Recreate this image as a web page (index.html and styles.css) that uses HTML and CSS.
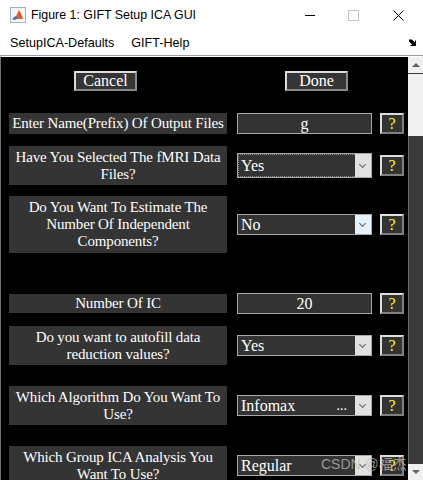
FILE: index.html
```html
<!DOCTYPE html>
<html lang="en">
<head>
    <meta charset="UTF-8">
    <title>Figure 1: GIFT Setup ICA GUI</title>
    <link rel="stylesheet" href="styles.css">
</head>
<body>

    <div class="window">
        <!-- Barra de titulo -->
        <div class="titlebar">
            <svg class="app-icon" width="16" height="16" viewBox="0 0 16 16">
                <rect x="0.5" y="0.5" width="15" height="15" fill="#f4f6fa" stroke="#9fb0c8"/>
                <path d="M2 12 L6 9 L9 3 L13 12 Z" fill="#e8641c"/>
                <path d="M2 12 L6 9 L8 11 L5 13 Z" fill="#3f6fb5"/>
                <path d="M9 3 L11 8 L13 12 L10 9 Z" fill="#c23b12"/>
            </svg>
            <span class="title">Figure 1: GIFT Setup ICA GUI</span>
            <div class="win-controls">
                <span class="ctl-min"></span>
                <span class="ctl-max"></span>
                <svg class="ctl-close" width="11" height="11" viewBox="0 0 11 11">
                    <path d="M0.5 0.5 L10.5 10.5 M10.5 0.5 L0.5 10.5" stroke="#000" stroke-width="1"/>
                </svg>
            </div>
        </div>

        <!-- Menu -->
        <div class="menubar">
            <span class="menu-item">SetupICA-Defaults</span>
            <span class="menu-item">GIFT-Help</span>
            <svg class="dock-icon" width="7" height="7" viewBox="0 0 7 7">
                <path d="M0 0.5 L3 0.5 L6 3.5 L6 1.5 L7 1.5 L7 7 L1.5 7 L1.5 6 L3.5 6 L0 2.5 Z" fill="#000"/>
            </svg>
        </div>

        <!-- Area da figura -->
        <div class="figure">
            <div class="panel">
                <div class="actions">
                    <button class="push">Cancel</button>
                    <button class="push done">Done</button>
                </div>

                <div class="row row-1">
                    <div class="label lines-1">Enter Name(Prefix) Of Output Files</div>
                    <div class="edit">g</div>
                    <button class="help">?</button>
                </div>

                <div class="row row-2">
                    <div class="label lines-2">Have You Selected The fMRI Data Files?</div>
                    <div class="select focused"><span class="value">Yes</span><span class="arrow"></span></div>
                    <button class="help">?</button>
                </div>

                <div class="row row-3">
                    <div class="label lines-3">Do You Want To Estimate The Number Of Independent Components?</div>
                    <div class="select"><span class="value">No</span><span class="arrow hot"></span></div>
                    <button class="help">?</button>
                </div>

                <div class="row row-4">
                    <div class="label lines-0">Number Of IC</div>
                    <div class="edit">20</div>
                    <button class="help">?</button>
                </div>

                <div class="row row-5">
                    <div class="label lines-2">Do you want to autofill data reduction values?</div>
                    <div class="select"><span class="value">Yes</span><span class="arrow"></span></div>
                    <button class="help">?</button>
                </div>

                <div class="row row-6">
                    <div class="label lines-2">Which Algorithm Do You Want To Use?</div>
                    <div class="select"><span class="value">Infomax</span><span class="more">...</span><span class="arrow"></span></div>
                    <button class="help">?</button>
                </div>

                <div class="row row-7">
                    <div class="label lines-2">Which Group ICA Analysis You Want To Use?</div>
                    <div class="select"><span class="value">Regular</span><span class="arrow"></span></div>
                    <button class="help">?</button>
                </div>
            </div>

            <!-- Barra de rolagem -->
            <div class="scrollbar">
                <div class="sb-btn"><span class="tri-up"></span></div>
                <div class="sb-thumb"></div>
                <div class="sb-track"></div>
                <div class="sb-btn"><span class="tri-down"></span></div>
            </div>

            <span class="watermark">CSDN @福杰</span>
        </div>
    </div>

</body>
</html>
```

FILE: styles.css
```css
/* Estilo geral */
body {
    margin: 0;
    background: #fff;
    font-family: "Liberation Sans", Arial, sans-serif;
}

.window {
    width: 423px;
    height: 480px;
    display: flex;
    flex-direction: column;
    overflow: hidden;
}

/* Barra de titulo */
.titlebar {
    height: 30px;
    display: flex;
    align-items: center;
    padding-left: 10px;
    font-size: 12.4px;
    color: #000;
}

.app-icon {
    margin-right: 5px;
}

.win-controls {
    margin-left: auto;
    display: flex;
    align-items: center;
}

.ctl-min {
    width: 10px;
    border-top: 1px solid #000;
    margin-right: 33px;
}

.ctl-max {
    width: 9px;
    height: 9px;
    border: 1px solid #c4c4c4;
    margin-right: 34px;
}

.ctl-close {
    margin-right: 19px;
}

/* Menu */
.menubar {
    height: 25px;
    display: flex;
    align-items: center;
    padding-left: 10px;
    font-size: 12.6px;
    border-bottom: 1px solid #a0a0a0;
}

.menu-item {
    margin-right: 17px;
}

.dock-icon {
    margin-left: auto;
    margin-right: 7px;
}

/* Figura */
.figure {
    position: relative;
    flex: 1;
    display: flex;
    border-top: 1px solid #fff;
    border-left: 1px solid #6d6d6d;
    overflow: hidden;
}

.panel {
    flex: 1;
    background: #000;
    padding-left: 8px;
    font-family: "Liberation Serif", "Times New Roman", serif;
    font-size: 16px;
    color: #fff;
}

/* Botoes Cancel / Done */
.actions {
    display: flex;
    margin-top: 14px;
    padding-left: 65px;
}

.push {
    width: 63px;
    height: 20px;
    padding: 0;
    background: #353535;
    color: #fff;
    font-family: inherit;
    font-size: 16px;
    line-height: 14px;
    border: 2px solid;
    border-color: #dcdcdc #8a8a8a #8a8a8a #dcdcdc;
}

.done {
    margin-left: 148px;
}

/* Linhas do formulario */
.row {
    display: flex;
    align-items: center;
}

.row-1 { margin-top: 22px; }
.row-2 { margin-top: 12px; }
.row-3 { margin-top: 11px; }
.row-4 { margin-top: 40px; }
.row-5 { margin-top: 12px; }
.row-6 { margin-top: 21px; }
.row-7 { margin-top: 21px; }

.label {
    width: 218px;
    box-sizing: border-box;
    padding: 0;
    background: #343434;
    text-align: center;
    font-size: 15px;
    letter-spacing: -0.15px;
    line-height: 17px;
    display: flex;
    align-items: center;
    justify-content: center;
}

.lines-0 { height: 19px; }
.lines-1 { height: 21px; }
.lines-2 { height: 39px; }
.lines-3 { height: 57px; }

.edit,
.select {
    width: 135px;
    height: 21px;
    box-sizing: border-box;
    margin-left: 10px;
    background: #333;
    border: 1px solid #a8a8a8;
    line-height: 19px;
}

.edit {
    text-align: center;
}

.select {
    display: flex;
}

.select.focused {
    height: 25px;
    line-height: 23px;
    outline: 1px dotted #888;
    outline-offset: -2px;
}

.select .value {
    flex: 1;
    padding-left: 3px;
}

.select .more {
    margin-right: 8px;
    font-size: 14px;
}

.arrow {
    width: 16px;
    background: #e1e1e1;
    position: relative;
}

.arrow.hot {
    background: #e5f1fb;
}

/* seta do combo */
.arrow::after {
    content: "";
    position: absolute;
    left: 5px;
    top: 50%;
    width: 4px;
    height: 4px;
    margin-top: -4px;
    border-right: 1px solid #606060;
    border-bottom: 1px solid #606060;
    transform: rotate(45deg);
}

.help {
    width: 24px;
    height: 21px;
    margin-left: 8px;
    padding: 0;
    background: #333;
    color: #ffff00;
    font-family: inherit;
    font-size: 16px;
    line-height: 17px;
    border: 2px solid;
    border-color: #dedede #808080 #808080 #dedede;
}

/* Barra de rolagem */
.scrollbar {
    width: 15px;
    display: flex;
    flex-direction: column;
    background: #3b3b3b;
}

.sb-btn {
    height: 16px;
    background: #f0f0f0;
    display: flex;
    align-items: center;
    justify-content: center;
}

.sb-thumb {
    height: 62px;
    margin-top: 1px;
    background: #f0f0f0;
}

.sb-track {
    flex: 1;
    border-left: 1px solid #6a6a6a;
}

.tri-up {
    border-left: 4px solid transparent;
    border-right: 4px solid transparent;
    border-bottom: 4px solid #606060;
}

.tri-down {
    border-left: 4px solid transparent;
    border-right: 4px solid transparent;
    border-top: 4px solid #606060;
}

.watermark {
    position: absolute;
    left: 320px;
    top: 396px;
    font-family: "Liberation Sans", "Noto Sans CJK SC", sans-serif;
    font-size: 14px;
    color: rgba(190, 190, 190, 0.75);
}
```
